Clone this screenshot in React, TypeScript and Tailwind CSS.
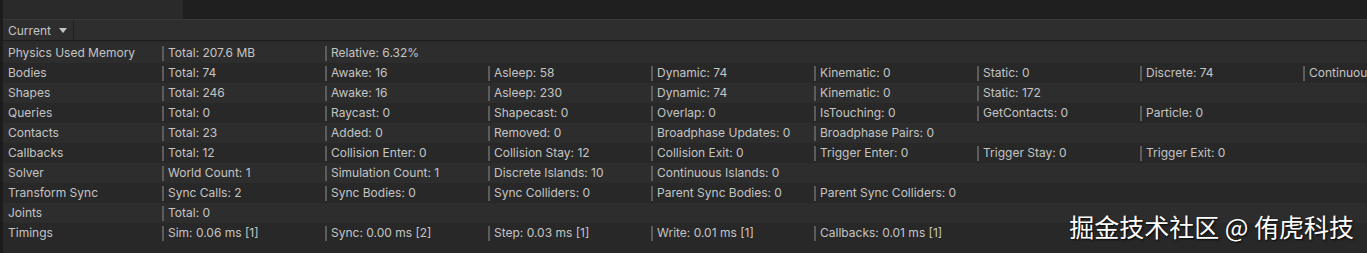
import React from "react";

const rows: [string, string[]][] = [
  ["Physics Used Memory", ["Total: 207.6 MB", "Relative: 6.32%"]],
  ["Bodies", ["Total: 74", "Awake: 16", "Asleep: 58", "Dynamic: 74", "Kinematic: 0", "Static: 0", "Discrete: 74", "Continuous: 0"]],
  ["Shapes", ["Total: 246", "Awake: 16", "Asleep: 230", "Dynamic: 74", "Kinematic: 0", "Static: 172"]],
  ["Queries", ["Total: 0", "Raycast: 0", "Shapecast: 0", "Overlap: 0", "IsTouching: 0", "GetContacts: 0", "Particle: 0"]],
  ["Contacts", ["Total: 23", "Added: 0", "Removed: 0", "Broadphase Updates: 0", "Broadphase Pairs: 0"]],
  ["Callbacks", ["Total: 12", "Collision Enter: 0", "Collision Stay: 12", "Collision Exit: 0", "Trigger Enter: 0", "Trigger Stay: 0", "Trigger Exit: 0"]],
  ["Solver", ["World Count: 1", "Simulation Count: 1", "Discrete Islands: 10", "Continuous Islands: 0"]],
  ["Transform Sync", ["Sync Calls: 2", "Sync Bodies: 0", "Sync Colliders: 0", "Parent Sync Bodies: 0", "Parent Sync Colliders: 0"]],
  ["Joints", ["Total: 0"]],
  ["Timings", ["Sim: 0.06 ms [1]", "Sync: 0.00 ms [2]", "Step: 0.03 ms [1]", "Write: 0.01 ms [1]", "Callbacks: 0.01 ms [1]"]],
];

export default function App() {
  return (
    <div
      className="relative w-[1367px] h-[253px] overflow-hidden bg-[#282828] text-[12px] text-[#c4c4c4] border-l-[3px] border-[#1c1c1c]"
      style={{ fontFamily: "Inter, 'Noto Sans', sans-serif" }}
    >
      {/* top tab band */}
      <div className="flex h-[19px] bg-[#1f1f1f]">
        <div className="w-[180px] h-full bg-[#2a2a2a]" />
      </div>
      <div className="h-[1px] bg-[#3a3a3a]" />
      {/* toolbar */}
      <div className="flex h-[21px] bg-[#2e2e2e] border-b border-[#1c1c1c]">
        <div className="flex items-center w-[71px] pl-[5px] pr-[4px] pt-[1px] justify-between border-r border-[#1f1f1f] whitespace-nowrap">
          <span>Current</span>
          <svg width="8" height="5" viewBox="0 0 8 5" className="mr-[2px]">
            <path d="M0 0 L8 0 L4 5 Z" fill="#c4c4c4" />
          </svg>
        </div>
      </div>
      <div className="h-[2px] bg-[#2a2a2a]" />
      {/* rows */}
      <div className="flex flex-col">
        {rows.map(([label, cells], i) => (
          <div
            key={label}
            className={`flex h-[20px] items-center whitespace-nowrap ${i % 2 === 0 ? "bg-[#2d2d2d]" : "bg-[#282828]"}`}
          >
            <div className="w-[159px] shrink-0 pl-[5px]">{label}</div>
            {cells.map((c) => (
              <div key={c} className="w-[163px] shrink-0 flex items-center">
                <div className="w-[2px] h-[15px] bg-[#5c5c5c]" />
                <span className="pl-[4px]">{c}</span>
              </div>
            ))}
          </div>
        ))}
      </div>
      {/* watermark */}
      <div
        className="absolute right-[13px] top-[209px] text-[25px] text-white leading-[34px] whitespace-nowrap"
        style={{
          fontFamily: "'Noto Sans CJK SC', 'Noto Sans', sans-serif",
          textShadow: "1px 1px 2px rgba(0,0,0,0.9)",
        }}
      >
        掘金技术社区 @ 侑虎科技
      </div>
    </div>
  );
}
